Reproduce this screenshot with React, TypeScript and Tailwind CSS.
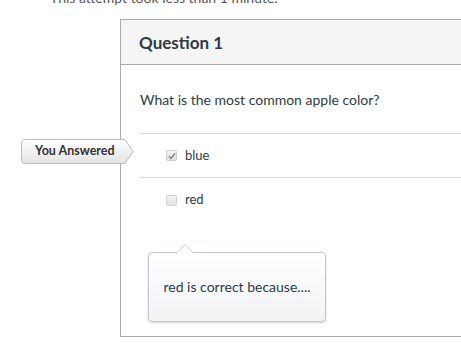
export default function App() {
  return (
    <div className="relative h-[356px] w-[461px] overflow-hidden bg-white font-['Lato','Liberation_Sans',sans-serif] text-[#2d3b45]">
      {/* attempt note, cut by the top edge */}
      <div className="ml-[50px] mt-[-12px] h-[20px] text-[14px] leading-[20px] text-[#555]">
        This attempt took less than 1 minute.
      </div>

      {/* question card */}
      <div className="ml-[120px] mt-[11px] w-[360px] border-y border-l border-[#aaaaaa]">
        <div className="flex h-[45px] items-center border-b border-[#aaaaaa] bg-[#f5f5f5] px-[18px]">
          <h2 className="text-[17px] font-bold leading-none">Question 1</h2>
        </div>

        <div className="pl-[18px] pt-[25px] pb-[14px]">
          <p className="h-[20px] pl-[1px] text-[14px] leading-[20px]">What is the most common apple color?</p>

          <div className="mt-[23px] border-t border-[#dddddd]">
            <div className="flex h-[44px] items-center gap-[8px] border-b border-[#dddddd] pl-[27px]">
              <Checkbox checked />
              <span className="text-[13px] leading-none">blue</span>
            </div>
            <div className="flex h-[44px] items-center gap-[8px] pl-[27px]">
              <Checkbox />
              <span className="-mt-[1px] text-[13px] leading-none">red</span>
            </div>
          </div>

          {/* answer comment */}
          <div className="relative ml-[9px] mt-[30px] flex h-[70px] w-[178px] items-center justify-center rounded-[4px] border border-[#c3c9ce] bg-gradient-to-b from-white to-[#f1f3f5] shadow-[0_1px_2px_rgba(0,0,0,0.18)]">
            <svg className="absolute left-[27px] top-[-9px]" width="18" height="10" viewBox="0 0 18 10">
              <path d="M0 9.5 L9 0.7 L18 9.5" fill="#ffffff" stroke="#c3c9ce" strokeWidth="1" />
              <rect x="0.5" y="9.5" width="17" height="1" fill="#ffffff" />
            </svg>
            <span className="text-[14px] leading-none">red is correct because....</span>
          </div>
        </div>
      </div>

      {/* "You Answered" flag over the card edge */}
      <div className="absolute left-[21px] top-[139px] flex h-[25px] w-[113px] items-center">
        <svg className="absolute inset-0" width="113" height="25" viewBox="0 0 113 25">
          <defs>
            <linearGradient id="flag" x1="0" y1="0" x2="0" y2="1">
              <stop offset="0" stopColor="#ffffff" />
              <stop offset="1" stopColor="#e4e4e4" />
            </linearGradient>
          </defs>
          <path
            d="M3.5 0.5 H104 L112 12.5 L104 24.5 H3.5 Q0.5 24.5 0.5 21.5 V3.5 Q0.5 0.5 3.5 0.5 Z"
            fill="url(#flag)"
            stroke="#bdbdbd"
            strokeWidth="1"
          />
        </svg>
        <span className="relative pl-[14px] text-[12.5px] font-bold leading-none text-[#333]">You Answered</span>
      </div>
    </div>
  );
}

function Checkbox({ checked = false }: { checked?: boolean }) {
  return (
    <span className="flex h-[11px] w-[11px] items-center justify-center rounded-[2px] border border-[#cfcfcf] bg-gradient-to-b from-[#f4f4f4] to-[#e2e2e2]">
      {checked && (
        <svg width="8" height="8" viewBox="0 0 8 8">
          <path d="M1 4.2 L3 6.2 L7 1.5" fill="none" stroke="#8a8a8a" strokeWidth="1.6" />
        </svg>
      )}
    </span>
  );
}
